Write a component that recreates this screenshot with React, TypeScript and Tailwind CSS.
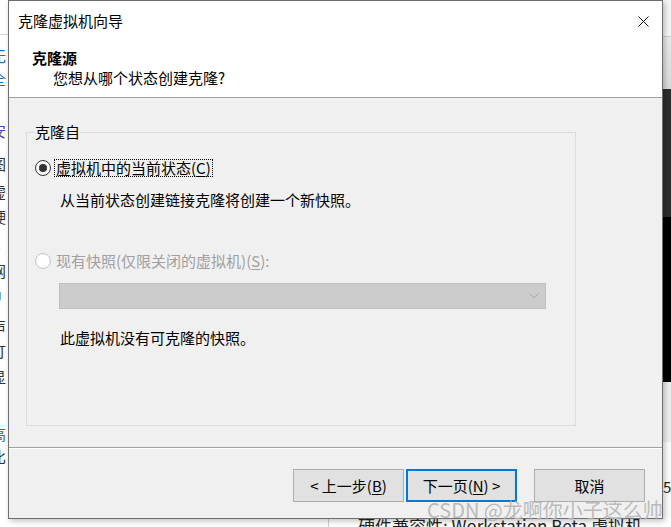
import React from "react";

const font = "font-['Noto_Sans_CJK_SC','Microsoft_YaHei',sans-serif]";

function Radio({ checked, disabled }: { checked?: boolean; disabled?: boolean }) {
  return (
    <span
      className={
        "flex h-[16px] w-[16px] shrink-0 items-center justify-center rounded-full border bg-white " +
        (disabled ? "border-[#c4c4c4]" : "border-[#333333] border-[1.5px]")
      }
    >
      {checked && <span className="h-[8px] w-[8px] rounded-full bg-[#333333]" />}
    </span>
  );
}

function Btn({ children, focus }: { children: React.ReactNode; focus?: boolean }) {
  return (
    <div
      className={
        "flex h-[33px] w-[111px] items-center justify-center bg-[#e1e1e1] text-[15px] leading-[20px] text-black " +
        (focus ? "border-2 border-[#0078d7]" : "border border-[#adadad]")
      }
    >
      {children}
    </div>
  );
}

export default function App() {
  const leftGlyphs: { y: number; t: string; c: string }[] = [
    { y: 46, t: "无", c: "text-[#1a6fc4]" },
    { y: 69, t: "全", c: "text-[#1a6fc4]" },
    { y: 121, t: "安", c: "text-[#4b3fc7]" },
    { y: 154, t: "图", c: "text-[#333]" },
    { y: 182, t: "虚", c: "text-[#333]" },
    { y: 207, t: "硬", c: "text-[#333]" },
    { y: 234, t: "C", c: "text-[#333]" },
    { y: 261, t: "网", c: "text-[#333]" },
    { y: 287, t: "U", c: "text-[#333]" },
    { y: 317, t: "声", c: "text-[#333]" },
    { y: 341, t: "打", c: "text-[#333]" },
    { y: 367, t: "显", c: "text-[#333]" },
    { y: 424, t: "高", c: "text-[#1a6fc4]" },
    { y: 447, t: "比", c: "text-[#333]" },
  ];

  return (
    <div className={"relative h-[527px] w-[671px] overflow-hidden bg-white " + font}>
      {/* background window pieces */}
      <div className="absolute left-0 top-[34px] h-px w-[8px] bg-[#d6d6d6]" />
      {leftGlyphs.map((g) => (
        <span
          key={g.y}
          className={"absolute left-[-9px] whitespace-nowrap text-[15px] leading-[20px] " + g.c}
          style={{ top: g.y }}
        >
          {g.t}
        </span>
      ))}
      <div className="absolute right-0 top-0 flex h-[527px] w-[9px] flex-col">
        <div className="h-[36px] bg-[#f7f7f7]" />
        <div className="h-px bg-[#cfcfcf]" />
        <div className="h-[52px] bg-gradient-to-b from-[#ececec] to-[#dcdcdc]" />
        <div className="h-[128px] bg-[#2d2d2d]" />
        <div className="h-[165px] bg-black" />
        <div className="h-[60px] bg-[#f0f0f0]" />
        <div className="flex-1 bg-white" />
      </div>
      <span className="absolute left-[663px] top-[477px] whitespace-nowrap text-[15px] leading-[20px] text-[#222]">
        54
      </span>
      <div className="absolute left-[328px] top-[518px] h-[9px] w-px bg-[#d0d0d0]" />
      <span className="absolute left-[358px] top-[514px] whitespace-nowrap text-[17px] leading-[24px] text-[#222]">
        硬件兼容性: Workstation Beta 虚拟机
      </span>

      {/* dialog window */}
      <div className="absolute left-[8px] top-0 flex h-[519px] w-[655px] flex-col border border-[#6e6e6e] bg-[#f0f0f0] shadow-[2px_2px_6px_rgba(0,0,0,0.25)]">
        <div className="flex h-[39px] items-center justify-between bg-white pl-[9px] pr-[13px]">
          <span className="pt-[1px] text-[15px] leading-[20px] text-black">克隆虚拟机向导</span>
          <svg width="11" height="11" viewBox="0 0 11 11" className="mt-[1px]">
            <path d="M0.5 0.5 L10.5 10.5 M10.5 0.5 L0.5 10.5" stroke="#111" strokeWidth="1" />
          </svg>
        </div>
        <div className="flex h-[57px] flex-col bg-white pt-[8px]">
          <span className="pl-[23px] text-[15px] font-bold leading-[20px] text-black">克隆源</span>
          <span className="pl-[44px] text-[15px] leading-[20px] text-black">您想从哪个状态创建克隆?</span>
        </div>
        <div className="h-px bg-[#a0a0a0]" />
        <div className="flex-1 pl-[17px] pt-[24px]">
          <fieldset className="h-[304px] w-[550px] border border-[#dcdcdc] pl-[8px] pt-[16px]">
            <legend className="px-0 text-[15px] leading-[20px] text-black">克隆自</legend>
            <div className="flex h-[20px] items-center">
              <Radio checked />
              <span className="ml-[3px] border border-dotted border-black px-[1px] text-[15px] leading-[16px] text-black">
                虚拟机中的当前状态(<span className="underline underline-offset-2">C</span>)
              </span>
            </div>
            <div className="mt-[12px] pl-[25px] text-[15px] leading-[20px] text-black">
              从当前状态创建链接克隆将创建一个新快照。
            </div>
            <div className="mt-[41px] flex h-[20px] items-center">
              <Radio disabled />
              <span className="ml-[3px] border border-transparent px-[1px] text-[15px] leading-[16px] text-[#a0a0a0]">
                现有快照(仅限关闭的虚拟机)(<span className="underline underline-offset-2">S</span>):
              </span>
            </div>
            <div className="ml-[24px] mt-[12px] flex h-[26px] w-[487px] items-center justify-end border border-[#bfbfbf] bg-[#cccccc] pr-[6px]">
              <svg width="10" height="6" viewBox="0 0 10 6">
                <path d="M0.5 0.5 L5 5 L9.5 0.5" fill="none" stroke="#a8a8a8" strokeWidth="1" />
              </svg>
            </div>
            <div className="mt-[19px] pl-[25px] text-[15px] leading-[20px] text-black">
              此虚拟机没有可克隆的快照。
            </div>
          </fieldset>
        </div>
        <div className="h-px bg-[#a0a0a0]" />
        <div className="h-px bg-white" />
        <div className="flex h-[69px] items-start justify-end pr-[17px] pt-[20px]">
          <Btn>
            &lt; 上一步(<span className="underline underline-offset-2">B</span>)
          </Btn>
          <div className="ml-[2px]">
            <Btn focus>
              下一页(<span className="underline underline-offset-2">N</span>) &gt;
            </Btn>
          </div>
          <div className="ml-[17px]">
            <Btn>取消</Btn>
          </div>
        </div>
      </div>

      {/* watermark */}
      <span className="absolute left-[427px] top-[497px] whitespace-nowrap text-[20px] leading-[26px] text-[#b4b4b4]/90">
        CSDN @龙啊你小子这么帅
      </span>
    </div>
  );
}
